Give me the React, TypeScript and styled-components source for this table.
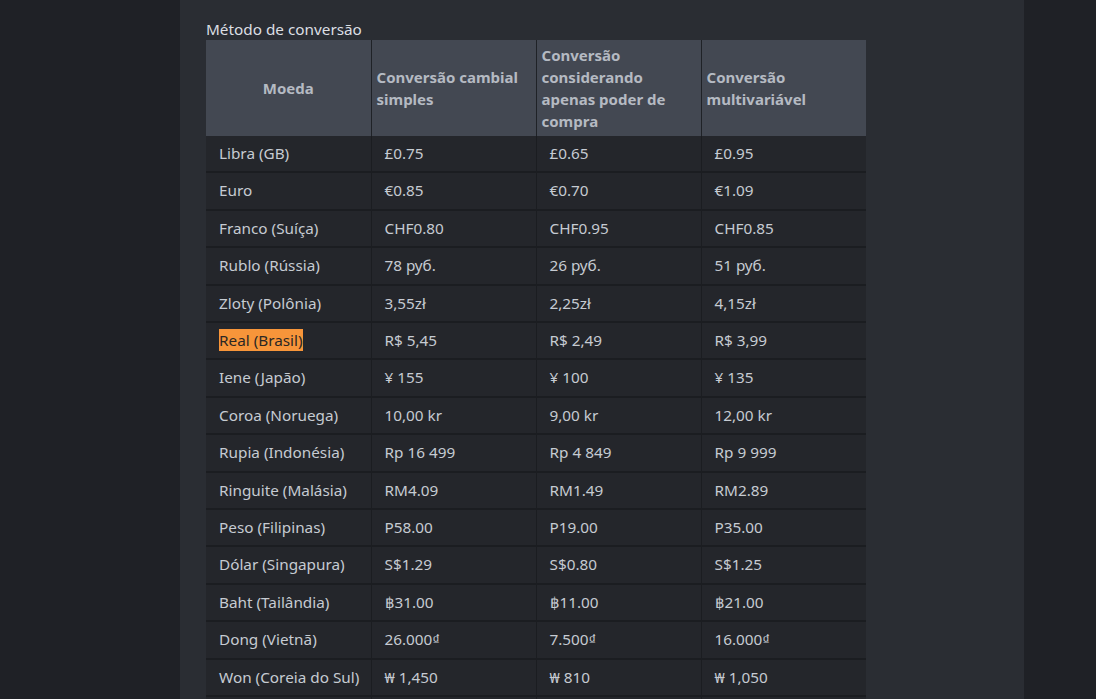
import React from "react";
import styled, { createGlobalStyle } from "styled-components";

const GlobalStyle = createGlobalStyle`
  html, body {
    margin: 0;
    padding: 0;
    background: #1f2126;
    overflow: hidden;
  }
  body {
    font-family: "Noto Sans", "Open Sans", Arial, sans-serif;
  }
`;

const Page = styled.div`
  display: flex;
  min-height: 100vh;
  background: #1f2126;
`;

const Panel = styled.main`
  margin-left: 180px;
  width: 844px;
  min-height: 100vh;
  box-sizing: border-box;
  padding: 0 26px;
  background: #2a2d33;
`;

const Title = styled.div`
  padding-top: 19px;
  font-size: 15.3px;
  line-height: 21px;
  color: #dcdfe3;
`;

const Table = styled.table`
  width: 660px;
  border-collapse: collapse;
  table-layout: fixed;
  font-size: 15.3px;
`;

const HeadCell = styled.th<{ $center?: boolean }>`
  background: #434852;
  color: #b5bac2;
  font-size: 15px;
  font-weight: bold;
  line-height: 22px;
  padding: 4px 5px 4px 5px;
  text-align: ${(p) => (p.$center ? "center" : "left")};
  vertical-align: middle;
  border-right: 1px solid #1f2227;
  &:last-child {
    border-right: none;
  }
`;

const Cell = styled.td`
  background: #24262b;
  color: #c6cbd2;
  line-height: 21.4px;
  padding: 7px 13px;
  white-space: nowrap;
  border-right: 1px solid #1b1d21;
  border-bottom: 2px solid #1b1d21;
  &:last-child {
    border-right: none;
  }
`;

const Highlight = styled.span`
  background: #f7953a;
  color: #2b2724;
  padding: 1px 0;
`;

const Dong = styled.span`
  font-family: "Liberation Sans", Arial, sans-serif;
`;

type Row = [string, string, string, string, boolean?];

const rows: Row[] = [
  ["Libra (GB)", "£0.75", "£0.65", "£0.95"],
  ["Euro", "€0.85", "€0.70", "€1.09"],
  ["Franco (Suíça)", "CHF0.80", "CHF0.95", "CHF0.85"],
  ["Rublo (Rússia)", "78 руб.", "26 руб.", "51 руб."],
  ["Zloty (Polônia)", "3,55zł", "2,25zł", "4,15zł"],
  ["Real (Brasil)", "R$ 5,45", "R$ 2,49", "R$ 3,99", true],
  ["Iene (Japão)", "¥ 155", "¥ 100", "¥ 135"],
  ["Coroa (Noruega)", "10,00 kr", "9,00 kr", "12,00 kr"],
  ["Rupia (Indonésia)", "Rp 16 499", "Rp 4 849", "Rp 9 999"],
  ["Ringuite (Malásia)", "RM4.09", "RM1.49", "RM2.89"],
  ["Peso (Filipinas)", "P58.00", "P19.00", "P35.00"],
  ["Dólar (Singapura)", "S$1.29", "S$0.80", "S$1.25"],
  ["Baht (Tailândia)", "฿31.00", "฿11.00", "฿21.00"],
  ["Dong (Vietnã)", "26.000₫", "7.500₫", "16.000₫"],
  ["Won (Coreia do Sul)", "₩ 1,450", "₩ 810", "₩ 1,050"],
  ["\u00a0", "\u00a0", "\u00a0", "\u00a0"],
];

const renderValue = (v: string) =>
  v.endsWith("₫") ? (
    <>
      {v.slice(0, -1)}
      <Dong>₫</Dong>
    </>
  ) : (
    v
  );

export default function App() {
  return (
    <>
      <GlobalStyle />
      <Page>
        <Panel>
          <Title>Método de conversão</Title>
          <Table>
            <thead>
              <tr>
                <HeadCell $center>Moeda</HeadCell>
                <HeadCell>Conversão cambial simples</HeadCell>
                <HeadCell>Conversão considerando apenas poder de compra</HeadCell>
                <HeadCell>Conversão multivariável</HeadCell>
              </tr>
            </thead>
            <tbody>
              {rows.map(([name, a, b, c, hl], i) => (
                <tr key={i}>
                  <Cell>{hl ? <Highlight>{name}</Highlight> : name}</Cell>
                  <Cell>{renderValue(a)}</Cell>
                  <Cell>{renderValue(b)}</Cell>
                  <Cell>{renderValue(c)}</Cell>
                </tr>
              ))}
            </tbody>
          </Table>
        </Panel>
      </Page>
    </>
  );
}
